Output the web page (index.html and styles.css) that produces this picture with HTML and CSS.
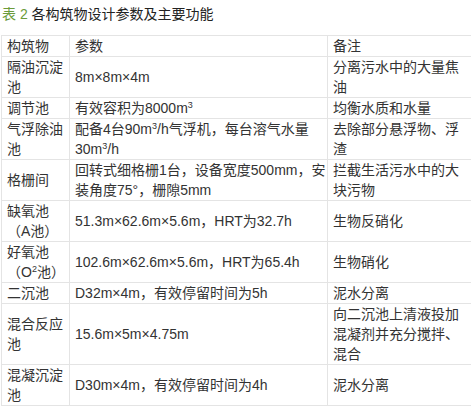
FILE: index.html
```html
<!DOCTYPE html>
<html lang="zh-CN">
<head>
  <meta charset="UTF-8" />
  <title>表 2 各构筑物设计参数及主要功能</title>
  <link rel="stylesheet" href="styles.css">
</head>
<body>
  <!-- Table caption -->
  <div class="caption"><span class="caption-num">表 2</span> 各构筑物设计参数及主要功能</div>

  <table class="spec-table">
    <colgroup>
      <col class="col-name">
      <col class="col-param">
      <col class="col-note">
    </colgroup>
    <tr>
      <td>构筑物</td>
      <td>参数</td>
      <td>备注</td>
    </tr>
    <tr>
      <td>隔油沉淀池</td>
      <td>8m×8m×4m</td>
      <td>分离污水中的大量焦油</td>
    </tr>
    <tr>
      <td>调节池</td>
      <td>有效容积为8000m<sup>3</sup></td>
      <td>均衡水质和水量</td>
    </tr>
    <tr>
      <td>气浮除油池</td>
      <td>配备4台90m<sup>3</sup>/h气浮机，每台溶气水量30m<sup>3</sup>/h</td>
      <td>去除部分悬浮物、浮渣</td>
    </tr>
    <tr>
      <td>格栅间</td>
      <td>回转式细格栅1台，设备宽度500mm，安装角度75°，栅隙5mm</td>
      <td>拦截生活污水中的大块污物</td>
    </tr>
    <tr>
      <td>缺氧池<span class="keep">（A池）</span></td>
      <td>51.3m×62.6m×5.6m，HRT为32.7h</td>
      <td>生物反硝化</td>
    </tr>
    <tr>
      <td>好氧池<span class="keep">（O<sup>2</sup>池）</span></td>
      <td>102.6m×62.6m×5.6m，HRT为65.4h</td>
      <td>生物硝化</td>
    </tr>
    <tr>
      <td>二沉池</td>
      <td>D32m×4m，有效停留时间为5h</td>
      <td>泥水分离</td>
    </tr>
    <tr>
      <td>混合反应池</td>
      <td>15.6m×5m×4.75m</td>
      <td>向二沉池上清液投加混凝剂并充分搅拌、混合</td>
    </tr>
    <tr>
      <td>混凝沉淀池</td>
      <td>D30m×4m，有效停留时间为4h</td>
      <td>泥水分离</td>
    </tr>
  </table>
</body>
</html>
```

FILE: styles.css
```css
* {
  box-sizing: border-box;
}
body {
  margin: 0;
  overflow: hidden;
  background: #fff;
  color: #333;
  font-family: "Liberation Sans", "Noto Sans CJK SC", sans-serif;
  font-size: 14px;
}

/* Caption above the table */
.caption {
  margin: 4px 0 11px;
  padding-left: 2px;
  line-height: 20px;
  color: #222;
  white-space: nowrap;
}
.caption-num {
  color: #6b9b3a;
}

/* Spec table */
.spec-table {
  margin-left: 1px;
  width: 480px;
  table-layout: fixed;
  border-collapse: collapse;
}
.col-name { width: 68px; }
.col-param { width: 258px; }
.col-note { width: 154px; }

.spec-table td {
  border: 1px solid #e4e4e4;
  padding: 0 0 0 5px;
  line-height: 20px;
  vertical-align: middle;
  text-align: left;
}
.spec-table td:last-child {
  padding-right: 14px;
}
.spec-table .keep {
  white-space: nowrap;
}
.spec-table sup {
  font-size: 9px;
  line-height: 0;
  vertical-align: 5px;
}
```
